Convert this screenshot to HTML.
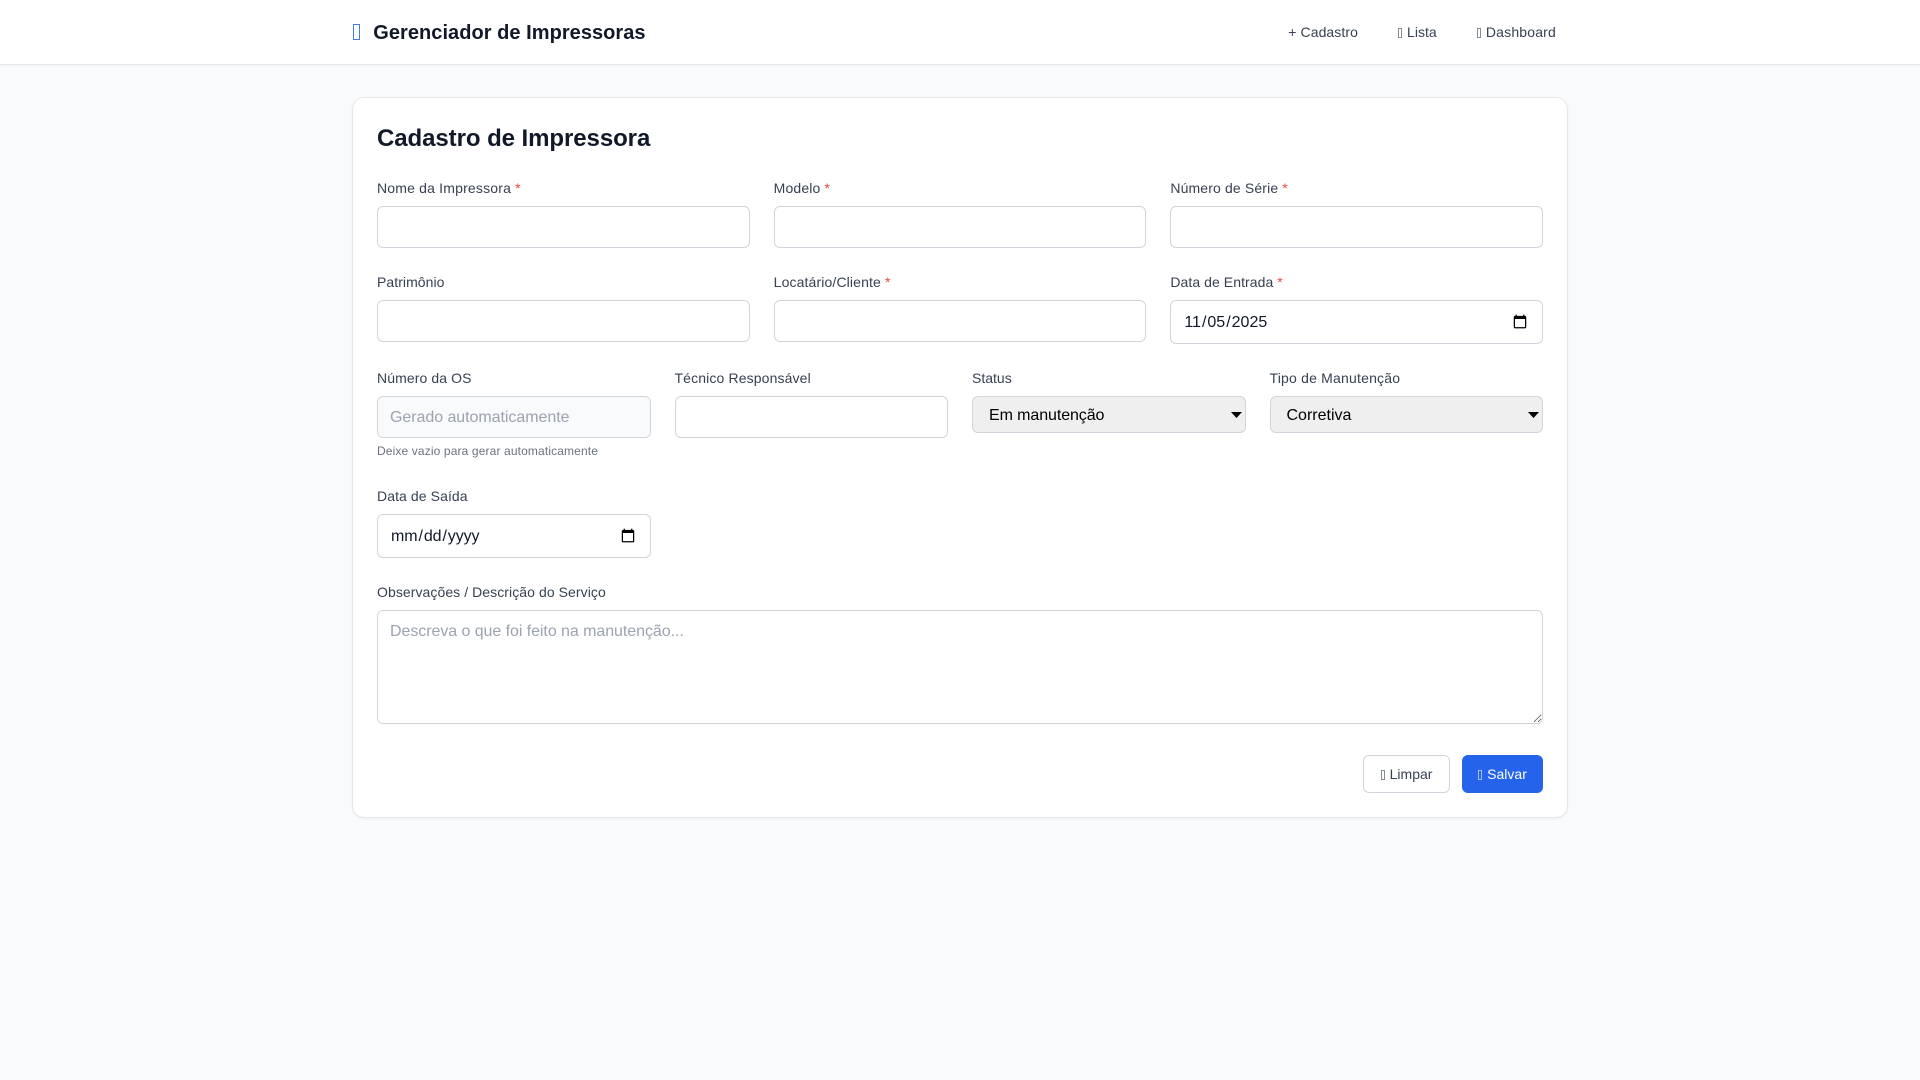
<!DOCTYPE html>
<html lang="pt-BR">
<head>
<meta charset="utf-8">
<title>Gerenciador de Impressoras</title>
<style>
*{box-sizing:border-box}
html,body{margin:0;padding:0}
body{width:1920px;height:1080px;background:#f9fafb;font-family:"Liberation Sans",Arial,sans-serif;color:#111827;overflow:hidden}
header{height:65px;background:#fff;border-bottom:1px solid #e5e7eb;box-shadow:0 1px 2px rgba(0,0,0,.03)}
.hwrap{width:1216px;margin:0 auto;height:64px;display:flex;align-items:center;justify-content:space-between}
.logo{font-size:20px;font-weight:700;color:#111827;display:flex;align-items:center;line-height:28px;position:relative;top:.5px;letter-spacing:.04px}
.logo i{display:block;width:6.4px;height:16px;border:1px solid #2563eb;margin:-1px 13.6px 0 1.3px;opacity:.85}
.t{display:inline-block;width:4px;height:9.5px;border:1px solid currentColor;opacity:.6;margin:0 .9px 0 .3px;vertical-align:-.5px}
nav{display:flex;gap:16px}
nav a{font-size:14px;line-height:20px;padding:8px 12px;color:#374151;text-decoration:none}
main{width:1216px;margin:32px auto 0}
.card{height:721px;background:#fff;border:1px solid #e5e7eb;border-radius:12px;padding:24px;box-shadow:0 1px 2px rgba(0,0,0,.05)}
h1{font-size:24px;line-height:32px;font-weight:700;margin:0 0 24px;color:#111827;position:relative;top:1px;letter-spacing:-.07px}
.row{display:grid;gap:24px;margin-bottom:24px}
.c3{grid-template-columns:repeat(3,1fr)}
.c4{grid-template-columns:repeat(4,1fr)}
label{display:block;font-size:14px;line-height:20px;margin-bottom:8px;color:#374151}
label b{font-weight:400;color:#ef4444}
input,select,textarea{display:block;width:100%;font-family:inherit;font-size:16px;border:1px solid #d1d5db;border-radius:6px;color:#111827;margin:0}
input,textarea{background:#fff}
input{height:42px;padding:12px 12px 10px}
input[type=date]{height:44px;padding:11px 12px}
input[type=date]::-webkit-datetime-edit{position:relative;top:.5px}
.nodate::-webkit-datetime-edit{letter-spacing:-.1px}
input.ro{background:#f9fafb}
input.ro::placeholder{letter-spacing:-.05px}
::placeholder{color:#9ca3af;opacity:1}
.sel{position:relative}
.sel svg{position:absolute;right:4px;top:15.5px;pointer-events:none}
select{height:37px;padding:9px 24px 7px 16px;background-color:#efefef;color:#000;appearance:none;-webkit-appearance:none}
textarea{height:114px;resize:vertical;font-size:16px;line-height:18px;padding:12px 12px 10px}
textarea::placeholder{letter-spacing:-.06px}
.hint{font-size:12px;line-height:20px;height:21px;margin-top:3px;color:#6b7280;letter-spacing:.13px}
.actions{display:flex;justify-content:flex-end;gap:12px;margin-top:31px}
.btn{height:38px;width:87px;font-family:inherit;font-size:14px;border-radius:6px;border:1px solid #d1d5db;background:#fff;color:#374151;padding:0;margin:0;text-align:center}
.btn.p{width:81px;background:#2563eb;border-color:#2563eb;color:#fff}
</style>
</head>
<body>
<header>
  <div class="hwrap">
    <div class="logo"><i></i>Gerenciador de Impressoras</div>
    <nav>
      <a href="#" style="letter-spacing:.08px">+ Cadastro</a>
      <a href="#"><span class="t"></span> Lista</a>
      <a href="#" style="letter-spacing:.18px"><span class="t"></span> Dashboard</a>
    </nav>
  </div>
</header>
<main>
  <form class="card" onsubmit="return false">
    <h1>Cadastro de Impressora</h1>
    <div class="row c3">
      <div><label style="letter-spacing:.185px">Nome da Impressora <b>*</b></label><input type="text"></div>
      <div><label style="letter-spacing:.15px">Modelo <b>*</b></label><input type="text"></div>
      <div><label style="letter-spacing:.14px">Número de Série <b>*</b></label><input type="text"></div>
    </div>
    <div class="row c3">
      <div><label style="letter-spacing:.06px">Patrimônio</label><input type="text"></div>
      <div><label style="letter-spacing:.13px">Locatário/Cliente <b>*</b></label><input type="text"></div>
      <div><label style="letter-spacing:.07px">Data de Entrada <b>*</b></label><input type="date" value="2025-11-05"></div>
    </div>
    <div class="row c4">
      <div><label style="letter-spacing:.1px">Número da OS</label><input class="ro" type="text" placeholder="Gerado automaticamente"><div class="hint">Deixe vazio para gerar automaticamente</div></div>
      <div><label style="letter-spacing:.13px">Técnico Responsável</label><input type="text"></div>
      <div><label>Status</label><div class="sel"><select style="letter-spacing:-.09px"><option>Em manutenção</option></select><svg width="11" height="6" viewBox="0 0 11 6"><path d="M0 0H11L5.5 6Z" fill="#000"/></svg></div></div>
      <div><label style="letter-spacing:.2px">Tipo de Manutenção</label><div class="sel"><select><option>Corretiva</option></select><svg width="11" height="6" viewBox="0 0 11 6"><path d="M0 0H11L5.5 6Z" fill="#000"/></svg></div></div>
    </div>
    <div class="row c4">
      <div><label style="letter-spacing:.09px">Data de Saída</label><input class="nodate" type="date"></div>
    </div>
    <div>
      <label style="letter-spacing:.07px">Observações / Descrição do Serviço</label>
      <textarea placeholder="Descreva o que foi feito na manutenção..."></textarea>
    </div>
    <div class="actions">
      <button type="button" class="btn"><span class="t"></span> Limpar</button>
      <button type="button" class="btn p"><span class="t"></span> Salvar</button>
    </div>
  </form>
</main>
</body>
</html>
